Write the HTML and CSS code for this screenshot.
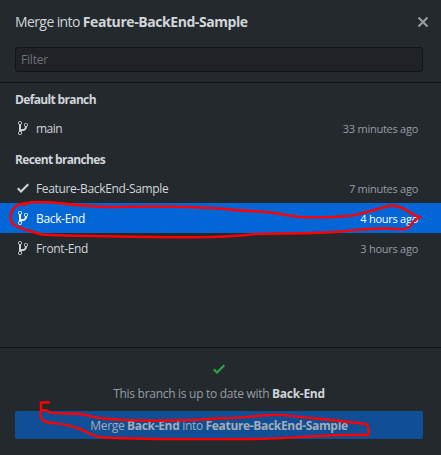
FILE: index.html
```html
<!DOCTYPE html>
<html lang="en">
<head>
<meta charset="utf-8">
<title>Merge branch</title>
<link rel="stylesheet" href="styles.css">
</head>
<body>
<svg class="defs" width="0" height="0" aria-hidden="true">
  <symbol id="branch" viewBox="0 0 10 16"><path d="M10 5c0-1.11-.89-2-2-2a1.993 1.993 0 0 0-1 3.72v.3c-.02.52-.23.98-.63 1.38-.4.4-.86.61-1.38.63-.83.02-1.48.16-2 .45V4.72a1.993 1.993 0 0 0-1-3.72C.88 1 0 1.89 0 3a2 2 0 0 0 1 1.72v6.56c-.59.35-1 .99-1 1.72 0 1.11.89 2 2 2 1.11 0 2-.89 2-2 0-.53-.2-1-.53-1.36.09-.06.48-.41.59-.47.25-.11.56-.17.94-.17 1.05-.05 1.95-.45 2.75-1.25S8.95 7.77 9 6.73h-.02C9.59 6.37 10 5.73 10 5zM2 1.8c.66 0 1.2.55 1.2 1.2 0 .65-.55 1.2-1.2 1.2C1.35 4.2.8 3.65.8 3c0-.65.55-1.2 1.2-1.2zm0 12.41c-.66 0-1.2-.55-1.2-1.2 0-.65.55-1.2 1.2-1.2.65 0 1.2.55 1.2 1.2 0 .65-.55 1.2-1.2 1.2zm6-8c-.66 0-1.2-.55-1.2-1.2 0-.65.55-1.2 1.2-1.2.65 0 1.2.55 1.2 1.2 0 .65-.55 1.2-1.2 1.2z"/></symbol>
  <symbol id="check" viewBox="0 0 12 16"><path d="M12 5l-8 8-4-4 1.5-1.5L4 10l6.5-6.5z"/></symbol>
  <symbol id="close" viewBox="0 0 12 16"><path d="M7.48 8l3.75 3.75-1.48 1.48L6 9.48l-3.75 3.75-1.48-1.48L4.52 8 .77 4.25l1.48-1.48L6 6.52l3.75-3.75 1.48 1.48z"/></symbol>
</svg>
<main class="dialog">
  <header class="header">
    <h1 class="title"><span class="title-lead">Merge into </span><strong>Feature-BackEnd-Sample</strong></h1>
    <svg class="icon close"><use href="#close"/></svg>
  </header>
  <div class="filter-area"><input class="filter" type="text" placeholder="Filter"></div>
  <section class="list">
    <h2 class="group">Default branch</h2>
    <div class="row"><svg class="icon"><use href="#branch"/></svg><span class="name name-main">main</span><span class="time">33 minutes ago</span></div>
    <h2 class="group">Recent branches</h2>
    <div class="row"><svg class="icon"><use href="#check"/></svg><span class="name">Feature-BackEnd-Sample</span><span class="time">7 minutes ago</span></div>
    <div class="row selected"><svg class="icon"><use href="#branch"/></svg><span class="name">Back-End</span><span class="time">4 hours ago</span></div>
    <div class="row"><svg class="icon"><use href="#branch"/></svg><span class="name">Front-End</span><span class="time">3 hours ago</span></div>
  </section>
  <footer class="footer">
    <svg class="icon ok"><use href="#check"/></svg>
    <p class="status">This branch is up to date with <strong>Back-End</strong></p>
    <button class="merge" disabled><span>Merge <strong>Back-End</strong> into <strong>Feature-BackEnd-Sample</strong></span></button>
  </footer>
  <svg class="marks" viewBox="0 0 441 455" width="441" height="455">
    <path d="M24 205L28 203C36 201 47 202 58 203C75 205 91 207 110 207C150 206 185 206 220 208.500C232 210 245 211 259 211.500C274 212 281 215 300 217C320 218 338 217 352 215.500C367 213 381 207 393 205.500C404 206 411 215 420 217.500C416 219 413 221 411 225C409 229 405 229.500 398 229C376 227 358 230 340 231.500C315 234 285 233 255 234C225 238 190 237.500 150 237C105 236 65 236 42 234.500C27 230 14 228 11 221C9 212 14 204 26 203"/>
    <path d="M49 402.500H41V410C39 418 42 421 48 422.500C60 424 69 424 77 428C89 432 92 437 105 437.500C155 440 205 439 252 439C292 439 321 434.500 347 435H368.500C369 430 369 426 366 424C349 422 332 420 317 418.500C299 418 291 414 271 415C253 416 237 418.500 219 418.500C180 421 140 422 104 418.500C90 417 83 413 70 413.500C57 414 49 413 47 410.500L41 410"/>
  </svg>
</main>
</body>
</html>
```
FILE: styles.css
```css
* { box-sizing: border-box; }
body {
  margin: 0;
  background: #24292e;
  color: #d1d5da;
  font: 12px/18px "Open Sans", "Noto Sans", sans-serif;
}
h1, h2, p { margin: 0; font-size: inherit; font-weight: inherit; }
strong { font-weight: 700; }
.defs { position: absolute; }
.dialog {
  position: relative;
  display: flex;
  flex-direction: column;
  width: 441px;
  height: 455px;
  overflow: hidden;
}
.icon { width: 12px; height: 16px; flex: none; fill: currentColor; }
.header {
  display: flex;
  justify-content: space-between;
  align-items: center;
  height: 47px;
  padding: 0 12px 3px 15px;
}
.title { font-size: 14px; letter-spacing: -0.43px; white-space: nowrap; }
.title-lead { letter-spacing: -0.6px; }
.close { color: #959da5; }
.filter-area { height: 36px; padding: 0 18px 0 15px; border-bottom: 1px solid #141414; }
.filter {
  display: block;
  width: 100%;
  height: 25px;
  padding: 0 5px;
  border: 1px solid #141414;
  border-radius: 3px;
  background: #1f2227;
  color: #d1d5da;
  font: inherit;
  letter-spacing: -0.2px;
}
.filter::placeholder { color: #6d7175; opacity: 1; }
.list { flex: 1; }
.group { height: 30px; padding: 2px 0 0 15px; line-height: 29px; font-weight: 700; letter-spacing: -0.65px; }
.row { display: flex; align-items: center; height: 30px; padding: 0 23px 0 17px; }
.name { margin-left: 7px; padding-top: 2px; flex: 1; letter-spacing: -0.34px; }
.name-main { letter-spacing: -0.5px; }
.time { padding-top: 1px; color: #959da5; font-size: 11px; letter-spacing: -0.26px; }
.selected { background: #0366d6; color: #fff; }
.selected .time { color: #fff; }
.footer {
  display: flex;
  flex-direction: column;
  align-items: center;
  height: 108px;
  padding: 13px 18px 0 15px;
  border-top: 1px solid #141414;
}
.ok { color: #28a745; }
.status { margin-top: 8px; color: #959da5; letter-spacing: -0.29px; }
.status strong { color: #d1d5da; }
.merge {
  width: 100%;
  height: 28px;
  margin-top: 8px;
  padding: 2px 0 0;
  border: 0;
  border-radius: 2px;
  background: #104f96;
  color: #a6abb1;
  font: inherit;
  letter-spacing: -0.33px;
  white-space: nowrap;
}
.marks { position: absolute; inset: 0; fill: none; stroke: #f00; stroke-width: 2.4; stroke-linejoin: round; stroke-linecap: round; pointer-events: none; }
```
